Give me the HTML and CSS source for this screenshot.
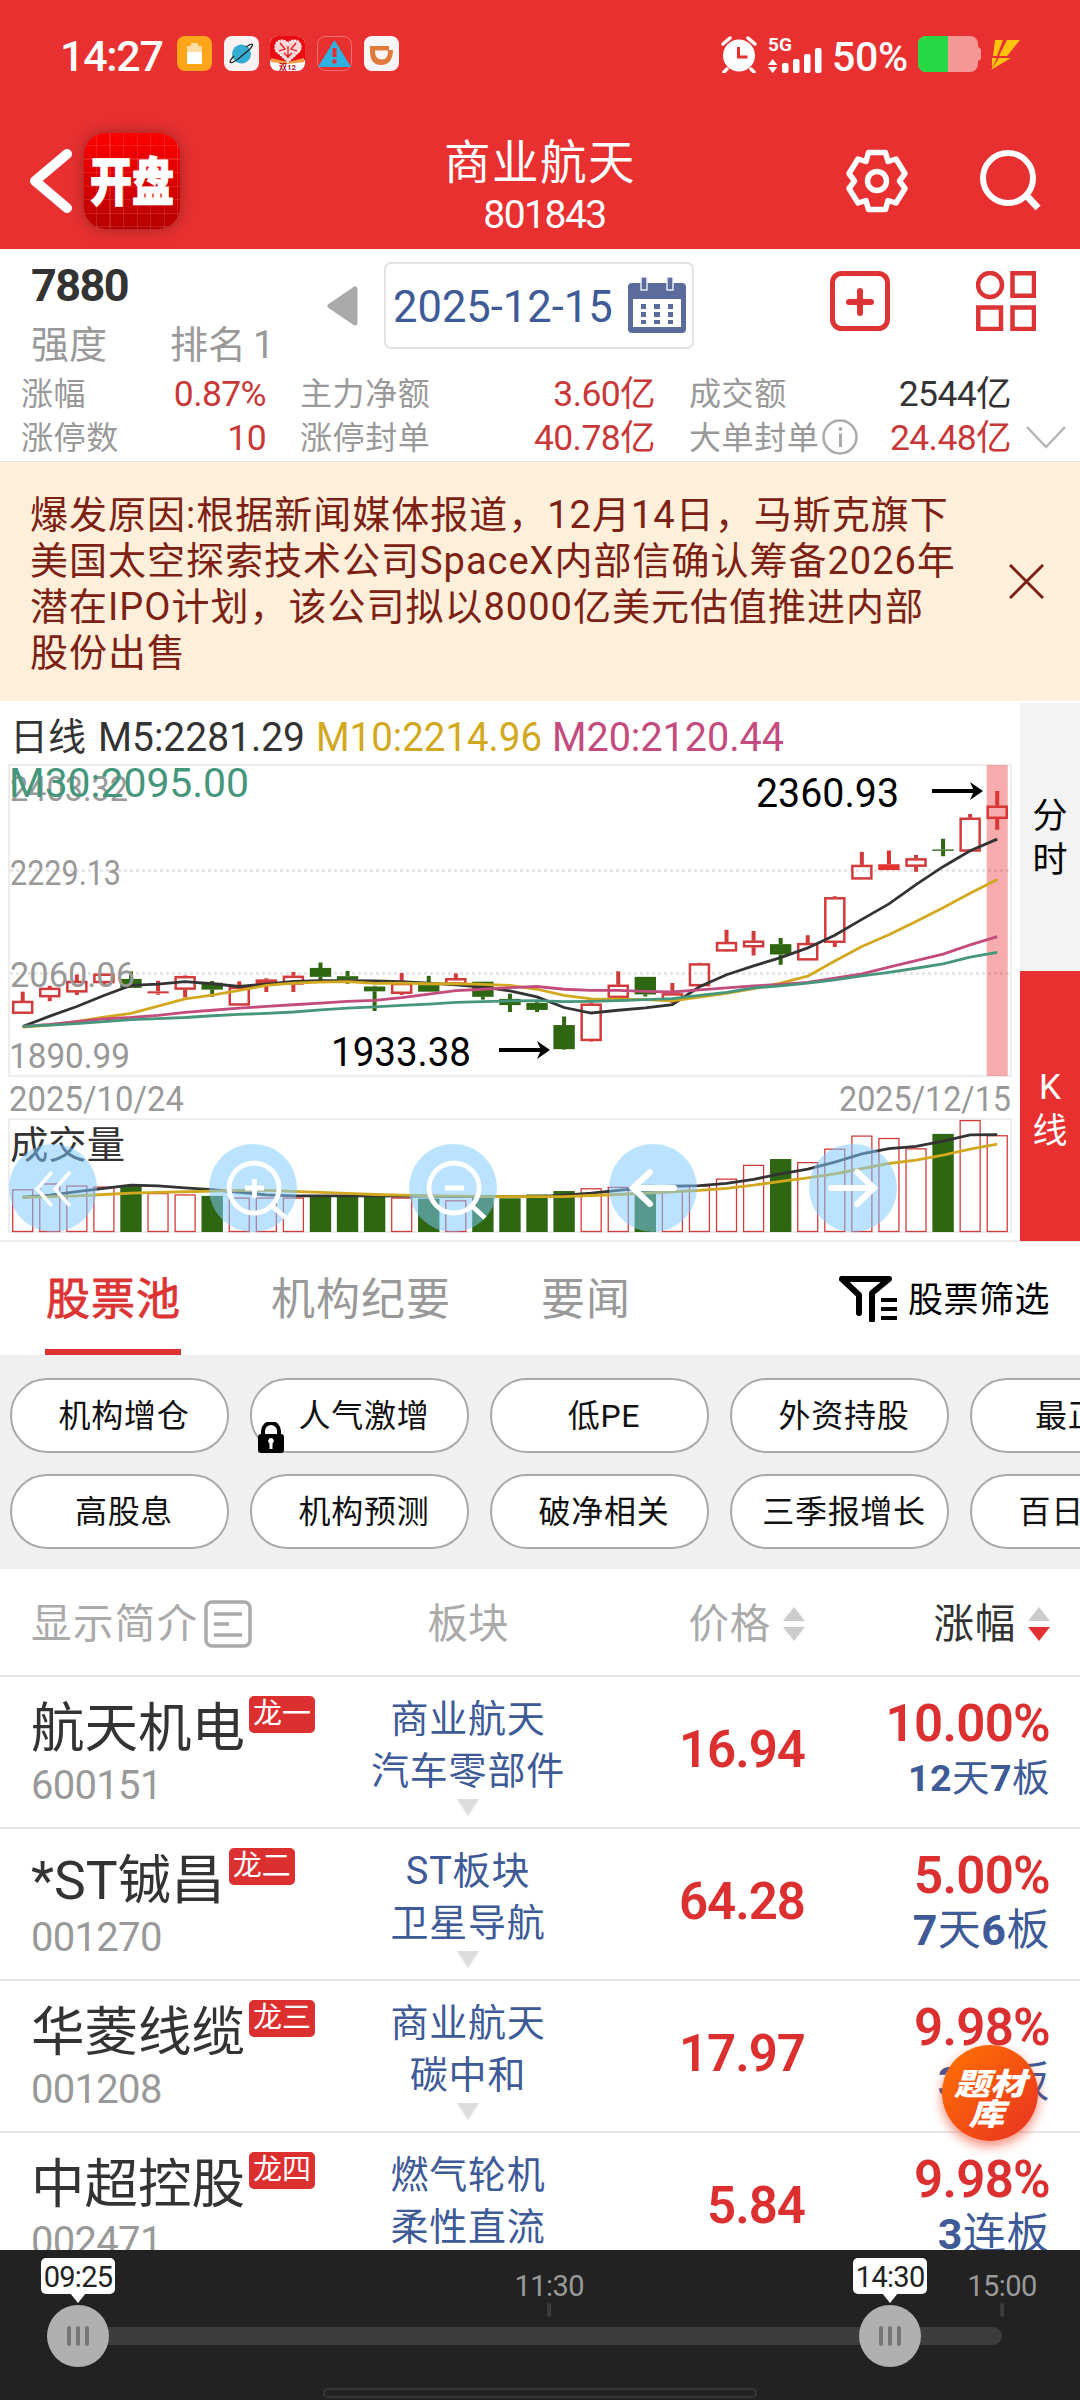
FILE: index.html
```html
<!DOCTYPE html>
<html lang="zh-CN">
<head>
    <meta charset="UTF-8">
    <meta name="viewport" content="width=device-width, initial-scale=1.0">
    <title>商业航天 801843</title>
    <link rel="stylesheet" href="styles.css">
</head>
<body>
    <div class="app">
        <header class="header">
            <div class="status">
                <span class="clock">14:27</span>
                <div class="status-apps">
                    <svg width="35" height="35" viewBox="0 0 35 35"><rect width="35" height="35" rx="8" fill="#ffa51a"/><path d="M10 10h4V7h7v3h4v7H10z" fill="#ffdca6"/><rect x="10" y="16" width="15" height="12" rx="1" fill="#fff"/></svg>
                    <svg width="35" height="35" viewBox="0 0 35 35"><rect width="35" height="35" rx="8" fill="#f8f2f2"/><circle cx="17.500" cy="18" r="9.500" fill="#35add3"/><path d="M10 20C3 27 6 29 14 23L26 13C31 7 28 7 22 11" fill="none" stroke="#222" stroke-width="1.300"/></svg>
                    <svg width="35" height="35" viewBox="0 0 35 35"><rect width="35" height="35" rx="8" fill="#fff"/><path d="M0 24V8a8 8 0 0 1 8-8h19a8 8 0 0 1 8 8v16L18 27z" fill="#ea0c13"/><path d="M1 22l17 4 16-4v4l-16 2-17-2z" fill="#f59a45"/><path d="M18 26L6 15C2 7 11 0 18 7c7-7 16 0 12 8z" fill="#fbd5d5" stroke="#fff" stroke-width="1.500" stroke-dasharray="2 1"/><path d="M10 7l5 6-6 2m17-8l-5 6 6 2m-9-5v12m-4-5l4 4 4-4" fill="none" stroke="#ea0c13" stroke-width="1.200"/><text x="17.500" y="33.500" font-size="8" font-weight="700" text-anchor="middle" fill="#b5121b">双12</text></svg>
                    <svg width="35" height="35" viewBox="0 0 35 35"><rect x=".5" y=".5" width="34" height="34" rx="8" fill="none" stroke="#f07070"/><path d="M17.500 4L34 31H1z" fill="#2cb1e0"/><path d="M15.500 12h4v9h-4zm0 11.500h4v4h-4z" fill="#e83030"/></svg>
                    <svg width="35" height="35" viewBox="0 0 35 35"><rect width="35" height="35" rx="8" fill="#f7f5f5"/><path d="M6 10h19v4h4c0 9-4 15-12 15S6 23 6 15z" fill="#e07b3c"/><path d="M11 14.500h13c0 6-2 9-6.500 9S11 20 11 14.500z" fill="#f7f5f5"/></svg>
                </div>
                <div class="status-right">
                    <svg width="36" height="37" viewBox="0 0 36 37"><circle cx="18" cy="19.500" r="16" fill="#fff"/><path d="M2 8l7-6M34 8l-7-6M6 33l-3 3M30 33l3 3" stroke="#fff" stroke-width="3.500" stroke-linecap="round"/><path d="M17.500 11v10h9" fill="none" stroke="#e83030" stroke-width="3"/></svg>
                    <svg class="signal" width="55" height="37" viewBox="0 0 55 37" fill="#fff"><text x="0" y="14.500" font-size="19" font-weight="700">5G</text><path d="M0 29l4.700-6 4.700 6zM0 31h9.400l-4.700 6z"/><rect x="14" y="27" width="6.500" height="10" rx="2"/><rect x="25" y="23" width="6.500" height="14" rx="2"/><rect x="36" y="18" width="6.500" height="19" rx="2"/><rect x="47" y="12" width="6.500" height="25" rx="2"/></svg>
                    <span class="battery-text">50%</span>
                    <svg class="battery" width="63" height="36" viewBox="0 0 63 36"><rect width="60" height="36" rx="8" fill="#f59797"/><path d="M60 11q3 1 3 3v8q0 2-3 3z" fill="#f59797"/><path d="M8 0h22v36H8a8 8 0 0 1-8-8V8a8 8 0 0 1 8-8z" fill="#27d845"/></svg>
                    <svg class="bolt" width="30" height="32" viewBox="0 0 30 32"><path d="M5 1h8L7 17H3zM17 1h13L17 17h-8zM2 19h5L2 29zM9 19h12L1 31z" fill="#ffc20e"/></svg>
                </div>
            </div>
            <div class="nav">
                <svg class="back" width="42" height="66" viewBox="0 0 42 66"><path d="M37 6L5 33l32 27" fill="none" stroke="#fff" stroke-width="10" stroke-linecap="round" stroke-linejoin="round"/></svg>
                <div class="logo"><span>开盘</span></div>
                <div class="nav-title">
                    <h1>商业航天</h1>
                    <p>801843</p>
                </div>
                <svg class="gear" width="66" height="66" viewBox="-33 -33 66 66" fill="none" stroke="#fff" stroke-width="5.500" stroke-linejoin="round"><path d="M-8.500-28.500H8.500L11-19.500 19-22 28-7.500 22.500 0 28 7.500 19 22 11 19.500 8.500 28.500H-8.500L-11 19.500-19 22-28 7.500-22.500 0-28-7.500-19-22-11-19.500z"/><circle r="9.500"/></svg>
                <svg class="search" width="66" height="66" viewBox="0 0 66 66" fill="none" stroke="#fff" stroke-width="6"><circle cx="31" cy="30" r="25"/><path d="M49 47l12 13" stroke-width="7"/></svg>
            </div>
        </header>

        <section class="summary">
            <div class="summary-top">
                <div class="strength">
                    <b>7880</b>
                    <div><span>强度</span><span>排名<i>1</i></span></div>
                </div>
                <svg class="prev" width="33" height="42" viewBox="0 0 33 42"><path d="M29 4v34L4 21z" fill="#aaa" stroke="#aaa" stroke-width="5" stroke-linejoin="round"/></svg>
                <div class="date">
                    <span>2025-12-15</span>
                    <svg width="58" height="56" viewBox="0 0 58 56"><rect y="6" width="58" height="50" rx="4" fill="#5b6c9c"/><rect x="5" y="22" width="48" height="28" fill="#fff"/><path d="M13 0h6v13h-6zM39 0h6v13h-6z" fill="#5b6c9c" stroke="#e5e9f3" stroke-width="1.500"/><path d="M13 27h5v5h-5zm13 0h6v5h-6zm14 0h5v5h-5zM13 35h5v5h-5zm13 0h6v5h-6zm14 0h5v5h-5zM13 43h5v4h-5zm13 0h6v4h-6zm14 0h5v4h-5z" fill="#5b6c9c"/></svg>
                </div>
                <svg class="add" width="60" height="60" viewBox="0 0 60 60" fill="none" stroke="#dc3434" stroke-width="5"><rect x="2.500" y="2.500" width="55" height="55" rx="9"/><path d="M30 20v22M19 31h22" stroke-width="6" stroke-linecap="round"/></svg>
                <svg class="grid" width="60" height="60" viewBox="0 0 60 60" fill="none" stroke="#dc3434" stroke-width="4.500"><circle cx="14" cy="14" r="12"/><path d="M36.500 2.300H58v22.500H36.500zM2.300 36.500H25V58H2.300zM36.500 36.500H58V58H36.500z"/></svg>
            </div>
            <div class="stats">
                <div class="stat"><span>涨幅</span><em>0.87%</em></div>
                <div class="stat"><span>主力净额</span><em>3.60亿</em></div>
                <div class="stat"><span>成交额</span><em class="dark">2544亿</em></div>
                <div></div>
                <div class="stat"><span>涨停数</span><em>10</em></div>
                <div class="stat"><span>涨停封单</span><em>40.78亿</em></div>
                <div class="stat"><span>大单封单</span><svg class="info" width="36" height="36" viewBox="0 0 36 36"><circle cx="18" cy="18" r="16.500" fill="none" stroke="#aaa" stroke-width="2.500"/><path d="M18.500 14.500V28" stroke="#aaa" stroke-width="3"/><circle cx="18.500" cy="10" r="2" fill="#aaa"/></svg><em>24.48亿</em></div>
                <svg class="more" width="40" height="24" viewBox="0 0 40 24"><path d="M1 1l19 20L39 1" fill="none" stroke="#b5b5b5" stroke-width="2.500"/></svg>
            </div>
        </section>

        <section class="notice">
            <p>爆发原因:根据新闻媒体报道，12月14日，马斯克旗下<br>美国太空探索技术公司SpaceX内部信确认筹备2026年<br>潜在IPO计划，该公司拟以8000亿美元估值推进内部<br>股份出售</p>
            <svg width="35" height="35" viewBox="0 0 35 35"><path d="M1 1l33 33M34 1L1 34" stroke="#7c2114" stroke-width="3"/></svg>
        </section>

        <section class="chart">
            <svg id="kline" class="kline" width="1020" height="540" viewBox="0 1 1020 540"></svg>
            <div class="periods">
                <span>分<br>时</span>
                <span class="on">K<br>线</span>
            </div>
        </section>

        <nav class="tabs">
            <span class="tab on">股票池</span>
            <span class="tab">机构纪要</span>
            <span class="tab">要闻</span>
            <div class="screen">
                <svg width="60" height="46" viewBox="0 0 60 46"><path d="M3 3h47L33 17v27M3 3l17 16v18" fill="none" stroke="#000" stroke-width="6" stroke-linejoin="round" stroke-linecap="round"/><path d="M42 22h16v4H42zm0 9h16v4H42zm0 9h16v4H42z"/></svg>
                <span>股票筛选</span>
            </div>
        </nav>

        <section class="filters">
            <span>机构增仓</span>
            <span class="locked">人气激增<svg width="26" height="31" viewBox="0 0 26 31"><path d="M5 14V9a8 8 0 0 1 16 0v5" fill="none" stroke="#000" stroke-width="4"/><rect y="12" width="26" height="19" rx="3"/><path d="M13 16a3 3 0 0 1 1.500 5.500V27h-3v-5.500A3 3 0 0 1 13 16z" fill="#fff"/></svg></span>
            <span>低PE</span>
            <span>外资持股</span>
            <span>最正宗</span>
            <span>高股息</span>
            <span>机构预测</span>
            <span>破净相关</span>
            <span>三季报增长</span>
            <span>百日新高</span>
        </section>

        <section class="table">
            <div class="row head">
                <div class="intro">显示简介<svg width="48" height="48" viewBox="0 0 48 48" fill="none" stroke="#aaa" stroke-width="3.500"><rect x="2" y="2" width="44" height="44" rx="6"/><path d="M10 14h28M10 24h15M10 35h28"/></svg></div>
                <div class="plate">板块</div>
                <div class="price">价格<svg width="22" height="34" viewBox="0 0 22 34" fill="#ccc"><path d="M0 14L11 0l11 14zM0 20h22L11 34z"/></svg></div>
                <div class="change">涨幅<svg width="22" height="34" viewBox="0 0 22 34" fill="#ccc"><path d="M0 14L11 0l11 14z"/><path d="M0 20h22L11 34z" fill="#e33030"/></svg></div>
            </div>
            <div class="row">
                <div class="stock"><div class="name">航天机电<sup>龙一</sup></div><p>600151</p></div>
                <div class="plate">商业航天<br>汽车零部件<i></i></div>
                <div class="price">16.94</div>
                <div class="change">10.00%<p class="small"><b>12</b>天<b>7</b>板</p></div>
            </div>
            <div class="row">
                <div class="stock"><div class="name">*ST铖昌<sup>龙二</sup></div><p>001270</p></div>
                <div class="plate">ST板块<br>卫星导航<i></i></div>
                <div class="price">64.28</div>
                <div class="change">5.00%<p><b>7</b>天<b>6</b>板</p></div>
            </div>
            <div class="row">
                <div class="stock"><div class="name">华菱线缆<sup>龙三</sup></div><p>001208</p></div>
                <div class="plate">商业航天<br>碳中和<i></i></div>
                <div class="price">17.97</div>
                <div class="change">9.98%<p><b>3</b>连板</p></div>
            </div>
            <div class="row">
                <div class="stock"><div class="name">中超控股<sup>龙四</sup></div><p>002471</p></div>
                <div class="plate">燃气轮机<br>柔性直流<i></i></div>
                <div class="price">5.84</div>
                <div class="change">9.98%<p><b>3</b>连板</p></div>
            </div>
            <div class="float"><span>题材</span><span>库</span></div>
        </section>

        <footer class="timeline">
            <div class="track">
                <span class="mark" style="left: 51%">11:30</span>
                <span class="mark" style="left: 100%">15:00</span>
                <div class="knob" style="left: 0%"><span>09:25</span><i></i><i></i><i></i></div>
                <div class="knob" style="left: 87.9%"><span>14:30</span><i></i><i></i><i></i></div>
            </div>
            <div class="home"></div>
        </footer>
    </div>
    <script src="script.js"></script>
</body>
</html>
```

FILE: styles.css
```css
* {
    box-sizing: border-box;
    margin: 0;
    padding: 0;
}
body {
    width: 1080px;
    height: 2400px;
    overflow: hidden;
    background: #fff;
    color: #333;
    font-family: Roboto, "Noto Sans CJK SC", sans-serif;
}
svg {
    display: block;
    flex-shrink: 0;
}
i, em {
    font-style: normal;
}
.app {
    display: flex;
    flex-direction: column;
    height: 2400px;
    overflow: hidden;
}
.app > * {
    flex-shrink: 0;
}

/* header */
.header {
    height: 249px;
    background: #e83030;
    color: #fff;
}
.status {
    display: flex;
    height: 108px;
    padding: 36px 60px 0 60px;
    line-height: 40px;
}
.clock {
    width: 117px;
    font-size: 43px;
    font-weight: 500;
    letter-spacing: -1.300px;
}
.status-apps {
    display: flex;
    gap: 11.700px;
}
.status-right {
    display: flex;
    margin-left: auto;
}
.signal {
    margin-left: 11px;
}
.battery-text {
    width: 86px;
    padding-left: 9px;
    font-size: 41px;
    font-weight: 500;
    line-height: 42px;
    letter-spacing: -.300px;
}
.battery {
    margin-left: 9px;
}
.bolt {
    margin: 3px 0 0 9px;
}
.nav {
    display: flex;
    align-items: center;
    height: 141px;
    padding: 0 38px 0 30px;
}
.back {
    margin-top: 4px;
}
.logo {
    display: flex;
    align-items: center;
    justify-content: center;
    width: 96px;
    height: 96px;
    margin: 5px 0 0 12px;
    border-radius: 22px;
    background:
        repeating-linear-gradient(90deg, transparent 0 12px, rgba(255, 255, 255, .12) 12px 13.500px),
        repeating-linear-gradient(transparent 0 12px, rgba(255, 255, 255, .12) 12px 13.500px),
        linear-gradient(#fe0000, #b60000);
    box-shadow: 0 0 14px rgba(80, 30, 30, .5);
    font-size: 42px;
    font-weight: 900;
}
.logo span {
    margin-top: -8px;
    transform: scaleY(1.250);
    -webkit-text-stroke: 1px #fff;
}
.nav-title {
    width: 280px;
    margin: 18px auto 0 220px;
    text-align: center;
}
.nav-title h1 {
    font-size: 46.500px;
    font-weight: 400;
    line-height: 54px;
    letter-spacing: 1.500px;
}
.nav-title p {
    padding-left: 9px;
    font-size: 39px;
    line-height: 50px;
    letter-spacing: -1.500px;
}
.gear {
    margin: 4px 67px 0 0;
}
.search {
    margin: 4px -1px 0 0;
}

/* summary */
.summary {
    height: 213px;
    border-bottom: 1px solid #e8e4dc;
}
.summary-top {
    display: flex;
    height: 123px;
    padding: 13px 43px 0 31px;
}
.strength {
    width: 295px;
}
.strength b {
    display: block;
    font-size: 45px;
    line-height: 48px;
    letter-spacing: -1.600px;
}
.strength div {
    display: flex;
    gap: 63px;
    margin-top: 11px;
    color: #999;
    font-size: 38px;
    line-height: 49px;
}
.strength i {
    margin-left: 7px;
}
.prev {
    margin-top: 23px;
}
.date {
    display: flex;
    align-items: center;
    justify-content: space-between;
    width: 310px;
    height: 87px;
    margin-left: 25px;
    padding: 4px 6px 0 7px;
    border: 2px solid #e2e2e2;
    border-radius: 7px;
    color: #3e5a97;
    font-size: 43.500px;
}
.date svg {
    margin-top: -5px;
}
.add {
    margin: 9px 86px 0 136px;
}
.grid {
    margin-top: 9px;
}
.stats {
    display: grid;
    grid-template-columns: 245px 355px 322px 1fr;
    column-gap: 34px;
    grid-auto-rows: 44px;
    padding-left: 21px;
    color: #999;
    font-size: 32px;
    line-height: 44px;
}
.stat {
    display: flex;
    justify-content: space-between;
}
.stat span {
    letter-spacing: .600px;
}
.stat em {
    color: #c93838;
    font-size: 35.500px;
    letter-spacing: -.600px;
}
.stat .dark {
    color: #333;
}
.info {
    margin: 3px auto 0 3px;
}
.more {
    margin: 10px 0 0 -19px;
}

/* notice */
.notice {
    display: flex;
    justify-content: space-between;
    align-items: center;
    height: 239px;
    padding: 0 36px 0 30px;
    background: #fdefd9;
    color: #7c2114;
}
.notice p {
    padding-top: 4px;
    font-size: 38px;
    line-height: 46px;
    letter-spacing: 1px;
}

/* chart */
.chart {
    display: flex;
    height: 541px;
    border-bottom: 2px solid #ececec;
}
.periods {
    width: 60px;
    margin-top: 2px;
}
.periods span {
    display: flex;
    align-items: center;
    justify-content: center;
    height: 268px;
    padding-top: 4px;
    background: #f3f3f3;
    color: #000;
    font-size: 35px;
    line-height: 44px;
    text-align: center;
}
.periods .on {
    height: 270px;
    padding-top: 7px;
    background: #e83030;
    color: #fff;
}
.kline text {
    font-family: Roboto, "Noto Sans CJK SC", sans-serif;
}

/* tabs */
.tabs {
    display: flex;
    height: 113px;
    padding: 0 30px 0 45px;
    color: #999;
    font-size: 44px;
    line-height: 116px;
    letter-spacing: 1px;
}
.tab {
    height: 113px;
    margin-right: 90px;
}
.tab.on {
    padding-left: 1px;
    border-bottom: 6px solid #dc3434;
    color: #dc3434;
    -webkit-text-stroke: .8px #dc3434;
}
.screen {
    display: flex;
    align-items: center;
    gap: 9px;
    margin-left: auto;
    color: #000;
    font-size: 35px;
    letter-spacing: .500px;
}
.screen span {
    padding-top: 5px;
}

/* filters */
.filters {
    display: grid;
    grid-template-columns: repeat(5, 219px);
    grid-auto-rows: 75px;
    gap: 21px;
    height: 214px;
    padding: 23px 0 0 10px;
    overflow: hidden;
    background: #f0f0f0;
}
.filters span {
    position: relative;
    padding-left: 9px;
    border: 2px solid #aaa;
    border-radius: 37px;
    background: #fff;
    color: #111;
    font-size: 32px;
    line-height: 73px;
    letter-spacing: .700px;
    text-align: center;
    white-space: nowrap;
}
.locked svg {
    position: absolute;
    left: 6px;
    bottom: -2px;
}

/* stocks */
.table {
    position: relative;
    height: 681px;
    overflow: hidden;
}
.row {
    display: grid;
    grid-template-columns: 327px 220px 227px 245px;
    align-items: center;
    height: 152px;
    padding-left: 31px;
    border-bottom: 2px solid #e8e8e8;
}
.head {
    height: 108px;
    padding-top: 4px;
    color: #aaa;
    font-size: 40.500px;
    line-height: 60px;
}
.head > div {
    display: flex;
    align-items: center;
}
.intro {
    letter-spacing: 1.400px;
}
.intro svg {
    margin-left: 5px;
}
.head .plate {
    justify-content: center;
}
.head .price, .head .change {
    justify-content: flex-end;
    gap: 12px;
    letter-spacing: .800px;
}
.stock {
    align-self: start;
}
.name {
    display: flex;
    height: 87px;
    padding-top: 19px;
    font-size: 53.500px;
    line-height: 66px;
    white-space: nowrap;
}
.name sup {
    align-self: flex-start;
    height: 37px;
    margin-left: 4px;
    padding: 0 4px;
    border-radius: 5px;
    background: #dc3030;
    color: #fff;
    font-size: 29px;
    line-height: 37px;
}
.stock p {
    color: #999;
    font-size: 40px;
    line-height: 44px;
    letter-spacing: -.700px;
}
.plate {
    text-align: center;
}
.row:not(.head) .plate {
    align-self: start;
    padding-top: 16px;
    color: #3e5a97;
    font-size: 38px;
    line-height: 52px;
    letter-spacing: .800px;
}
.plate i {
    display: block;
    width: 22px;
    height: 17px;
    margin: 2px auto 0;
    background: #ddd;
    clip-path: polygon(0 0, 100% 0, 50% 100%);
}
.row:not(.head) .price {
    padding-bottom: 6px;
    color: #dc3030;
    font-size: 51px;
    font-weight: 600;
    letter-spacing: -1px;
    text-align: right;
}
.row:not(.head) .change {
    align-self: start;
    padding-top: 18px;
    color: #dc3030;
    font-size: 51px;
    font-weight: 600;
    line-height: 58px;
    letter-spacing: -.700px;
    text-align: right;
}
.head .change {
    color: #333;
}
.change p {
    color: #3e5a97;
    font-size: 43px;
    font-weight: 400;
    line-height: 50px;
    letter-spacing: .500px;
}
.change .small {
    font-size: 37.500px;
}
.float {
    position: absolute;
    left: 942px;
    top: 476px;
    display: flex;
    flex-direction: column;
    align-items: center;
    width: 96px;
    height: 96px;
    padding-top: 25px;
    border-radius: 50%;
    background: linear-gradient(135deg, #ff7400, #e93023);
    box-shadow: 0 5px 12px rgba(240, 60, 30, .6);
    color: #fff;
    font-size: 36px;
    font-style: italic;
    font-weight: 900;
    line-height: 30px;
}
.float span {
    transform: scaleY(.85);
}
.float span + span {
    margin-right: 7px;
}

/* timeline */
.timeline {
    height: 150px;
    padding: 77px 78px 0;
    background: #222;
}
.track {
    position: relative;
    height: 18px;
    border-radius: 9px;
    background: #3c3c3c;
}
.mark {
    position: absolute;
    bottom: 28px;
    height: 46px;
    color: #999;
    font-size: 29px;
    line-height: 30px;
    letter-spacing: -.500px;
    transform: translateX(-50%);
}
.mark::after {
    content: "";
    display: block;
    width: 4px;
    height: 14px;
    margin: 2px auto 0;
    border-radius: 2px;
    background: #3c3c3c;
}
.knob {
    position: absolute;
    top: -22px;
    display: flex;
    align-items: center;
    justify-content: center;
    gap: 5px;
    width: 62px;
    height: 62px;
    margin-left: -31px;
    border-radius: 50%;
    background: #b0b0b0;
}
.knob i {
    width: 4px;
    height: 20px;
    border-radius: 2px;
    background: #777;
}
.knob span {
    position: absolute;
    left: -6px;
    top: -47px;
    width: 74px;
    height: 36px;
    border-radius: 5px;
    background: #fff;
    color: #222;
    font-size: 29px;
    line-height: 38px;
    letter-spacing: -.700px;
    text-align: center;
}
.knob span::after {
    content: "";
    position: absolute;
    left: 29px;
    top: 35px;
    border: 8px solid transparent;
    border-top: 10px solid #fff;
    border-bottom: 0;
}
.home {
    width: 434px;
    height: 10px;
    margin: 43px auto 0;
    border: 2px solid #353535;
    border-radius: 5px;
}
```

FILE: script.js
```js
const K = 1 / 2.904;
const X0 = 22.7;
const STEP = 27.07;
const RED = '#d23b3b';
const GREEN = '#2f6612';

// colour, high, body top, body bottom, low
const candles = [
    ['r', 847, 874, 911, 911], ['r', 830, 836, 863, 875], ['r', 797, 816, 849, 857], ['r', 794, 795, 822, 828],
    ['g', 788, 810, 836, 836], ['r', 815, 846, 852, 856], ['r', 800, 802, 841, 864], ['g', 816, 821, 841, 862],
    ['r', 817, 833, 887, 887], ['r', 808, 812, 824, 848], ['r', 790, 801, 826, 848], ['g', 762, 778, 804, 814],
    ['g', 787, 802, 812, 824], ['g', 830, 832, 846, 903], ['r', 793, 822, 853, 857], ['g', 801, 828, 847, 847],
    ['r', 794, 808, 826, 826], ['g', 818, 818, 862, 870], ['g', 853, 868, 886, 906], ['g', 878, 880, 900, 906],
    ['g', 919, 944, 1014, 1016], ['r', 878, 882, 990, 992], ['r', 788, 827, 865, 877], ['g', 804, 804, 855, 861],
    ['r', 822, 852, 872, 880], ['r', 763, 765, 831, 831], ['r', 667, 703, 730, 731], ['r', 671, 699, 718, 742],
    ['g', 691, 709, 739, 769], ['r', 683, 706, 756, 756], ['r', 570, 573, 705, 717], ['r', 441, 479, 521, 521],
    ['f', 437, 477, 494, 494], ['r', 450, 460, 484, 499], ['g', 403, 434, 438, 454], ['r', 331, 342, 440, 440],
    ['r', 264, 307, 345, 377]
];
const volumes = [1421, 1404, 1410, 1413, 1410, 1432, 1436, 1440, 1445, 1445, 1445, 1443, 1443, 1443, 1445, 1448, 1453, 1445, 1447,
    1436, 1426, 1418, 1414, 1408, 1425, 1410, 1390, 1350, 1333, 1342, 1303, 1265, 1272, 1302, 1260, 1220, 1264];

const priceLines = {
    '#333333': [948, 918, 890, 858, 829, 825, 818, 824, 832, 825, 817, 815, 815, 816, 818, 822, 827, 834, 845, 862, 893, 909, 901,
        894, 885, 833, 798, 772, 748, 720, 683, 637, 592, 536, 484, 438, 404],
    '#d2a81e': [950, 944, 933, 921, 910, 889, 868, 857, 843, 829, 822, 819, 818, 823, 822, 824, 824, 826, 829, 840, 858, 868, 869,
        870, 874, 863, 852, 838, 822, 802, 758, 716, 682, 643, 603, 561, 521],
    '#c44b7d': [948, 942, 934, 926, 922, 916, 907, 901, 895, 890, 885, 880, 875, 872, 864, 854, 844, 840, 835, 832, 840, 843, 843,
        846, 848, 842, 836, 830, 826, 820, 808, 795, 776, 757, 738, 711, 687],
    '#46967c': [948, 944, 940, 934, 928, 925, 922, 917, 913, 910, 906, 900, 895, 891, 887, 883, 878, 876, 874, 873, 876, 875, 873,
        870, 867, 858, 849, 836, 830, 822, 813, 801, 791, 779, 766, 747, 733]
};
const volumeLines = {
    '#333333': [1444, 1438, 1428, 1418, 1409, 1411, 1417, 1422, 1430, 1437, 1440, 1440, 1440, 1440, 1441, 1441, 1442, 1442, 1442,
        1442, 1438, 1432, 1424, 1416, 1412, 1410, 1404, 1392, 1376, 1362, 1342, 1318, 1303, 1296, 1281, 1263, 1262],
    '#d2a81e': [1444, 1442, 1440, 1436, 1432, 1430, 1428, 1426, 1424, 1424, 1427, 1430, 1433, 1436, 1438, 1440, 1441, 1442, 1442,
        1442, 1442, 1439, 1436, 1432, 1428, 1424, 1418, 1409, 1398, 1388, 1376, 1361, 1346, 1336, 1322, 1304, 1290]
};

const x = i => X0 + i * STEP;
const rect = (l, t, w, h, attrs) => `<rect x="${l}" y="${t}" width="${w}" height="${h}" ${attrs}/>`;
const label = (l, b, size, color, width, text) =>
    `<text x="${l}" y="${b}" font-size="${size}" fill="${color}" textLength="${width}" lengthAdjust="spacingAndGlyphs">${text}</text>`;
const line = (values, color) =>
    `<polyline points="${values.map((v, i) => x(i) + ',' + v * K).join(' ')}" fill="none" stroke="${color}" stroke-width="2.8"/>`;

function drawFrames() {
    const frame = 'fill="none" stroke="#e8e8e8" stroke-width="1.5"';
    const dots = y => `<path d="M10 ${y}H1010" stroke="#e6e6e6" stroke-width="3" stroke-dasharray="3 3"/>`;
    return rect(9, 65, 1002, 311, frame) + rect(9, 419, 1002, 113, frame) + dots(170.5) + dots(273.5);
}

function drawCandles() {
    return candles.map(([c, high, top, bottom, low], i) => {
        const color = c === 'g' ? GREEN : c === 'f' ? '#e33030' : RED;
        const wick = `<path d="M${x(i)} ${high * K}V${top * K}M${x(i)} ${bottom * K}V${low * K}" stroke="${color}" stroke-width="4"/>`;
        const h = (bottom - top) * K;
        const body = c === 'r' && h > 3
            ? rect(x(i) - 9.5, top * K + 1, 19, h - 2, `fill="none" stroke="${color}" stroke-width="2.5"`)
            : rect(x(i) - 10.7, top * K, 21.4, h, `fill="${color}"`);
        return wick + body;
    }).join('');
}

function drawVolumes() {
    return volumes.map((v, i) => candles[i][0] === 'g'
        ? rect(x(i) - 10.7, v * K, 21.4, 532 - v * K, `fill="${GREEN}"`)
        : rect(x(i) - 10, v * K + .5, 20, 531 - v * K, `fill="none" stroke="${RED}" stroke-width="1.3"`)).join('');
}

function drawLabels() {
    return label(10, 101, 35, '#999', 118, '2403.32')
        + label(10, 185, 35, '#999', 111, '2229.13')
        + label(10, 287, 35, '#999', 125, '2060.06')
        + label(9, 368, 35, '#999', 121, '1890.99')
        + label(9, 411, 35, '#999', 175, '2025/10/24')
        + label(839, 411, 35, '#999', 172, '2025/12/15')
        + label(10, 50, 38, '#333', 76, '日线')
        + label(98, 50.5, 40, '#333', 207, 'M5:2281.29')
        + label(316, 50.5, 40, '#d2a81e', 226, 'M10:2214.96')
        + label(552, 50.5, 40, '#c44b7d', 232, 'M20:2120.44')
        + label(9, 97, 40, '#46967c', 240, 'M30:2095.00')
        + label(331, 366, 40, '#000', 140, '1933.38')
        + label(756, 107, 40, '#000', 143, '2360.93')
        + label(10, 458, 38, '#333', 115, '成交量')
        + '<path d="M499 350H546M932 91H979" stroke="#000" stroke-width="4"/>'
        + '<path d="M550 350l-13-9 4 9-4 9zM983 91l-13-9 4 9-4 9z"/>';
}

function drawButtons() {
    const icons = [
        'M52 472L37 489L52 506M70 472L55 489L70 506',
        'M254 463a25 25 0 1 0 .1 0M272 506L286 518M245 488h19M254.500 479v19',
        'M454 463a25 25 0 1 0 .1 0M472 506L485 518M445 488h19',
        'M674 488H633M650 472L633 488L650 504',
        'M831 488H874M857 472L874 488L857 504'
    ];
    return icons.map((d, i) => `<circle cx="${53 + i * 200}" cy="488" r="44" fill="#7dcaff" fill-opacity=".52"/>`
        + `<path d="${d}" fill="none" stroke="#fff" stroke-width="${i > 2 ? 6 : i ? 4.8 : 3.5}" ${i > 2 ? 'stroke-linecap="round"' : ''}/>`).join('');
}

document.getElementById('kline').innerHTML = drawFrames()
    + drawCandles()
    + rect(x(36) - 10.5, 65, 21, 311, 'fill="#e83030" fill-opacity=".4"')
    + drawVolumes()
    + Object.entries(priceLines).map(([c, v]) => line(v, c)).join('')
    + Object.entries(volumeLines).map(([c, v]) => line(v, c)).join('')
    + drawLabels()
    + drawButtons();
```
